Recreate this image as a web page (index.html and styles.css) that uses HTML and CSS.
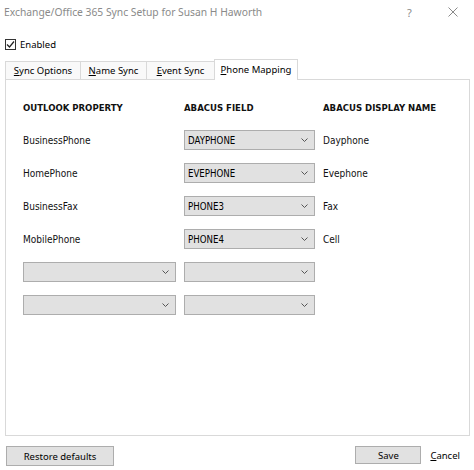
FILE: index.html
```html
<!DOCTYPE html>
<html>
<head>
<meta charset="utf-8">
<link rel="stylesheet" href="styles.css">
</head>
<body>
<div class="window">
  <div class="titlebar">
    <span class="title">Exchange/Office 365 Sync Setup for Susan H Haworth</span>
    <span class="tb-help">?</span>
    <span class="tb-close">
      <svg width="10" height="10" viewBox="0 0 10 10"><path d="M0.5 0.5 L9.5 9.5 M9.5 0.5 L0.5 9.5" stroke="#8a8a8a" stroke-width="1" fill="none"/></svg>
    </span>
  </div>
  <div class="enabled">
    <span class="checkbox">
      <svg width="11" height="11" viewBox="0 0 11 11"><rect x="0.5" y="0.5" width="10" height="10" fill="#fff" stroke="#333"/><path d="M2 5.5 L4.5 8 L9 2.5" stroke="#222" stroke-width="1.2" fill="none"/></svg>
    </span>
    <span class="label">Enabled</span>
  </div>
  <div class="tabs">
    <div class="tab tab-sync"><u>S</u>ync Options</div>
    <div class="tab tab-name"><u>N</u>ame Sync</div>
    <div class="tab tab-event"><u>E</u>vent Sync</div>
    <div class="tab tab-phone active"><u>P</u>hone Mapping</div>
  </div>
  <div class="panel">
    <div class="grid">
      <div class="hdr">OUTLOOK PROPERTY</div>
      <div class="hdr">ABACUS FIELD</div>
      <div class="hdr">ABACUS DISPLAY NAME</div>

      <div class="cell">BusinessPhone</div>
      <div class="combo"><span>DAYPHONE</span><svg class="chev" width="7" height="4" viewBox="0 0 7 4"><path d="M0.5 0.5 L3.5 3.5 L6.5 0.5" stroke="#555" fill="none"/></svg></div>
      <div class="cell">Dayphone</div>

      <div class="cell">HomePhone</div>
      <div class="combo"><span>EVEPHONE</span><svg class="chev" width="7" height="4" viewBox="0 0 7 4"><path d="M0.5 0.5 L3.5 3.5 L6.5 0.5" stroke="#555" fill="none"/></svg></div>
      <div class="cell">Evephone</div>

      <div class="cell">BusinessFax</div>
      <div class="combo"><span>PHONE3</span><svg class="chev" width="7" height="4" viewBox="0 0 7 4"><path d="M0.5 0.5 L3.5 3.5 L6.5 0.5" stroke="#555" fill="none"/></svg></div>
      <div class="cell">Fax</div>

      <div class="cell">MobilePhone</div>
      <div class="combo"><span>PHONE4</span><svg class="chev" width="7" height="4" viewBox="0 0 7 4"><path d="M0.5 0.5 L3.5 3.5 L6.5 0.5" stroke="#555" fill="none"/></svg></div>
      <div class="cell">Cell</div>

      <div class="combo"><span></span><svg class="chev" width="7" height="4" viewBox="0 0 7 4"><path d="M0.5 0.5 L3.5 3.5 L6.5 0.5" stroke="#555" fill="none"/></svg></div>
      <div class="combo"><span></span><svg class="chev" width="7" height="4" viewBox="0 0 7 4"><path d="M0.5 0.5 L3.5 3.5 L6.5 0.5" stroke="#555" fill="none"/></svg></div>
      <div class="cell"></div>

      <div class="combo"><span></span><svg class="chev" width="7" height="4" viewBox="0 0 7 4"><path d="M0.5 0.5 L3.5 3.5 L6.5 0.5" stroke="#555" fill="none"/></svg></div>
      <div class="combo"><span></span><svg class="chev" width="7" height="4" viewBox="0 0 7 4"><path d="M0.5 0.5 L3.5 3.5 L6.5 0.5" stroke="#555" fill="none"/></svg></div>
      <div class="cell"></div>
    </div>
  </div>
  <div class="footer">
    <div class="btn btn-restore">Restore defaults</div>
    <div class="spacer"></div>
    <div class="btn btn-save">Save</div>
    <div class="btn-link"><u>C</u>ancel</div>
  </div>
</div>
</body>
</html>
```
FILE: styles.css
```css
html, body {
  margin: 0;
  padding: 0;
  background: #fff;
}
.window {
  width: 474px;
  height: 470px;
  display: flex;
  flex-direction: column;
  font-family: "Noto Sans", "Open Sans", sans-serif;
  font-size: 10px;
  color: #000;
  background: #fff;
}
.titlebar {
  height: 24px;
  display: flex;
  align-items: center;
  padding-left: 4px;
  color: #8a8a8a;
  font-size: 10.3px;
}
.title {
  flex: 1;
  white-space: nowrap;
}
.tb-help {
  width: 10px;
  margin-right: 31px;
  font-size: 11px;
}
.tb-close {
  width: 10px;
  height: 10px;
  margin-right: 16px;
  display: flex;
}
.enabled {
  display: flex;
  align-items: center;
  margin-top: 15px;
  padding-left: 5px;
  height: 11px;
}
.checkbox {
  display: flex;
  width: 11px;
  height: 11px;
}
.enabled .label {
  margin-left: 4px;
  font-size: 9.5px;
}
.tabs {
  display: flex;
  align-items: flex-end;
  margin-top: 9px;
  padding-left: 5px;
  height: 20px;
  position: relative;
  z-index: 1;
}
.tab {
  box-sizing: border-box;
  height: 18px;
  border: 1px solid #d9d9d9;
  border-bottom: none;
  border-right: none;
  background: #f9f9f9;
  font-size: 9.5px;
  white-space: nowrap;
  display: flex;
  align-items: center;
  justify-content: center;
}
.tab-sync { width: 75px; }
.tab-name { width: 66px; }
.tab-event { width: 68px; }
.tab-phone {
  width: 84px;
  border-right: 1px solid #d9d9d9;
}
.tab.active {
  height: 21px;
  margin-bottom: -1px;
  background: #fff;
  align-items: flex-start;
  padding-top: 3px;
}
.panel {
  margin-left: 5px;
  width: 465px;
  height: 357px;
  box-sizing: border-box;
  border: 1px solid #d9d9d9;
  padding: 17px 0 0 17px;
  font-family: "DejaVu Sans Condensed", "DejaVu Sans", sans-serif;
  font-stretch: condensed;
  font-size: 10px;
}
.grid {
  display: grid;
  grid-template-columns: 153px 131px 1fr;
  column-gap: 8px;
  grid-auto-rows: 20px;
  row-gap: 13px;
}
.hdr {
  font-weight: bold;
  display: flex;
  align-items: center;
  font-size: 9.5px;
  color: #111;
  white-space: nowrap;
}
.cell {
  display: flex;
  align-items: center;
  color: #111;
}
.combo {
  box-sizing: border-box;
  border: 1px solid #adadad;
  background: #e1e1e1;
  display: flex;
  align-items: center;
  justify-content: space-between;
  padding: 0 6px 0 3px;
  color: #000;
  font-size: 9.6px;
}
.chev {
  display: block;
}
.footer {
  display: flex;
  align-items: flex-start;
  margin-top: 10px;
  padding-left: 6px;
}
.btn {
  box-sizing: border-box;
  height: 20px;
  border: 1px solid #adadad;
  background: #e1e1e1;
  display: flex;
  align-items: center;
  justify-content: center;
  font-size: 9.5px;
}
.btn-restore { width: 108px; }
.spacer { flex: 1; }
.btn-save { width: 66px; height: 18px; }
.btn-link {
  margin-left: 9px;
  margin-right: 14px;
  height: 18px;
  display: flex;
  align-items: center;
  font-size: 9.5px;
}
```
